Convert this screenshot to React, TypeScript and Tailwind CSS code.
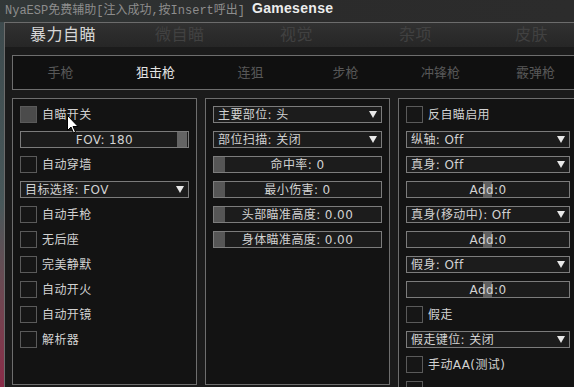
import React from "react";

const FONT = { fontFamily: '"DejaVu Sans", "Noto Sans CJK SC", sans-serif' };

const Arrow = () => (
    <svg width="8" height="7" viewBox="0 0 8 7" className="shrink-0">
        <polygon points="0,0 8,0 4,7" fill="#e8e8e8" />
    </svg>
);

const Check = ({ label, on }: { label: string; on?: boolean }) => (
    <div className="flex items-center gap-[5px] h-[17px] shrink-0">
        <div
            className={`w-[17px] h-[17px] border border-[#5a5a5a] ${on ? "bg-[#4b4b4b]" : "bg-[#161616]"}`}
        />
        <span className="text-[12px] leading-none text-[#d2d2d2] tracking-[0.4px]">
            {label}
        </span>
    </div>
);

const Drop = ({ label, w }: { label: string; w: string }) => (
    <div
        className={`${w} h-[17px] shrink-0 border border-[#7c7c7c] bg-[#1c1c1c] flex items-center justify-between pl-[4px] pr-[4px]`}
    >
        <span className="text-[12px] leading-none text-[#d2d2d2] tracking-[0.4px] whitespace-nowrap">
            {label}
        </span>
        <Arrow />
    </div>
);

const Slider = ({
    label,
    w,
    knob,
}: {
    label: string;
    w: string;
    knob: "left" | "right" | "mid";
}) => (
    <div
        className={`${w} h-[17px] shrink-0 border border-[#7c7c7c] bg-[#1c1c1c] relative flex items-center justify-center`}
    >
        {knob === "left" && (
            <div className="absolute left-0 top-0 bottom-0 w-[11px] bg-[#565656]" />
        )}
        {knob === "right" && (
            <div className="absolute right-[1px] top-0 bottom-0 w-[10px] bg-[#646464]" />
        )}
        {knob === "mid" && (
            <div className="absolute left-[76px] top-0 bottom-0 w-[9px] bg-[#5e5e5e]" />
        )}
        <span className="relative text-[12px] leading-none text-[#d2d2d2] tracking-[0.4px] whitespace-nowrap">
            {label}
        </span>
    </div>
);

const Panel = ({ children, h }: { children: React.ReactNode; h: string }) => (
    <div
        className={`w-[185px] shrink-0 ${h} border border-[#6e6e6e] bg-[#131313] pt-[7px] pl-[7px] flex flex-col gap-[8px]`}
    >
        {children}
    </div>
);

const tabs = [
    { t: "暴力自瞄", w: "w-[125px]", on: true },
    { t: "微自瞄", w: "w-[125px]" },
    { t: "视觉", w: "w-[119px]" },
    { t: "杂项", w: "w-[116px]" },
    { t: "皮肤", w: "w-[80px]" },
];

const subs = ["手枪", "狙击枪", "连狙", "步枪", "冲锋枪", "霰弹枪"];

export default function App() {
    return (
        <div
            className="w-[574px] h-[387px] overflow-hidden relative bg-[#2b2c2c] flex flex-col"
            style={FONT}
        >
            {/* title strip */}
            <div className="h-[22px] shrink-0 flex items-start bg-gradient-to-r from-[#323838] via-[#2b2b2b] to-[#2c2c2c]">
                <span
                    className="w-[252px] shrink-0 pl-[5px] pt-[5px] text-[12px] leading-none text-[#8d8d8d] whitespace-nowrap"
                    style={{ fontFamily: '"Liberation Mono", "Noto Sans CJK SC", monospace' }}
                >
                    NyaESP免费辅助[注入成功,按Insert呼出]
                </span>
                <span
                    className="pt-[1px] text-[14px] leading-[14px] font-bold text-[#ececec] tracking-[0.3px]"
                    style={{ fontFamily: '"Liberation Sans", Arial, sans-serif' }}
                >
                    Gamesense
                </span>
            </div>

            <div className="flex flex-1 min-h-0">
                <div className="w-[4px] shrink-0 bg-gradient-to-b from-[#3e4b4e] via-[#48585a] to-[#8a2a48]" />
                <div className="w-[588px] shrink-0 border-l border-t border-[#6c6c6c] bg-[#1b1b1b] flex flex-col">
                    {/* main tabs */}
                    <div className="h-[24px] shrink-0 flex items-center pl-[25px] bg-gradient-to-b from-[#313131] to-[#262626]">
                        {tabs.map((tab) => (
                            <span
                                key={tab.t}
                                className={`${tab.w} shrink-0 text-[16px] leading-none tracking-[0.5px] ${tab.on ? "text-[#d6d6d6]" : "text-[#414141]"}`}
                            >
                                {tab.t}
                            </span>
                        ))}
                    </div>

                    <div className="pt-[8px] pl-[7px] flex flex-col gap-[8px]">
                        {/* sub tabs */}
                        <div className="w-[571px] h-[35px] shrink-0 border border-[#6e6e6e] bg-[#101010] flex items-center">
                            {subs.map((s, i) => (
                                <span
                                    key={s}
                                    className={`w-[95px] shrink-0 text-center text-[13px] leading-none ${i === 1 ? "text-[#e4e4e4]" : "text-[#585858]"}`}
                                >
                                    {s}
                                </span>
                            ))}
                        </div>

                        {/* panels */}
                        <div className="flex items-start gap-[8px]">
                            <Panel h="h-[287px]">
                                <Check label="自瞄开关" on />
                                <Slider label="FOV: 180" w="w-[169px]" knob="right" />
                                <Check label="自动穿墙" />
                                <Drop label="目标选择: FOV" w="w-[169px]" />
                                <Check label="自动手枪" />
                                <Check label="无后座" />
                                <Check label="完美静默" />
                                <Check label="自动开火" />
                                <Check label="自动开镜" />
                                <Check label="解析器" />
                            </Panel>
                            <Panel h="h-[287px]">
                                <Drop label="主要部位: 头" w="w-[169px]" />
                                <Drop label="部位扫描: 关闭" w="w-[169px]" />
                                <Slider label="命中率: 0" w="w-[169px]" knob="left" />
                                <Slider label="最小伤害: 0" w="w-[169px]" knob="left" />
                                <Slider label="头部瞄准高度: 0.00" w="w-[169px]" knob="left" />
                                <Slider label="身体瞄准高度: 0.00" w="w-[169px]" knob="left" />
                            </Panel>
                            <Panel h="h-[320px]">
                                <Check label="反自瞄启用" />
                                <Drop label="纵轴: Off" w="w-[164px]" />
                                <Drop label="真身: Off" w="w-[164px]" />
                                <Slider label="Add:0" w="w-[164px]" knob="mid" />
                                <Drop label="真身(移动中): Off" w="w-[164px]" />
                                <Slider label="Add:0" w="w-[164px]" knob="mid" />
                                <Drop label="假身: Off" w="w-[164px]" />
                                <Slider label="Add:0" w="w-[164px]" knob="mid" />
                                <Check label="假走" />
                                <Drop label="假走键位: 关闭" w="w-[164px]" />
                                <Check label="手动AA(测试)" />
                                <Check label="" />
                            </Panel>
                        </div>
                    </div>
                </div>
            </div>

            {/* mouse cursor */}
            <svg
                className="absolute left-[67px] top-[115px]"
                width="12"
                height="19"
                viewBox="0 0 12 19"
            >
                <path
                    d="M0.5 0.5 L0.5 15.5 L4 12 L6.5 18 L8.5 17 L6 11.5 L11 11.5 Z"
                    fill="#ffffff"
                    stroke="#000000"
                    strokeWidth="1"
                />
            </svg>
        </div>
    );
}
